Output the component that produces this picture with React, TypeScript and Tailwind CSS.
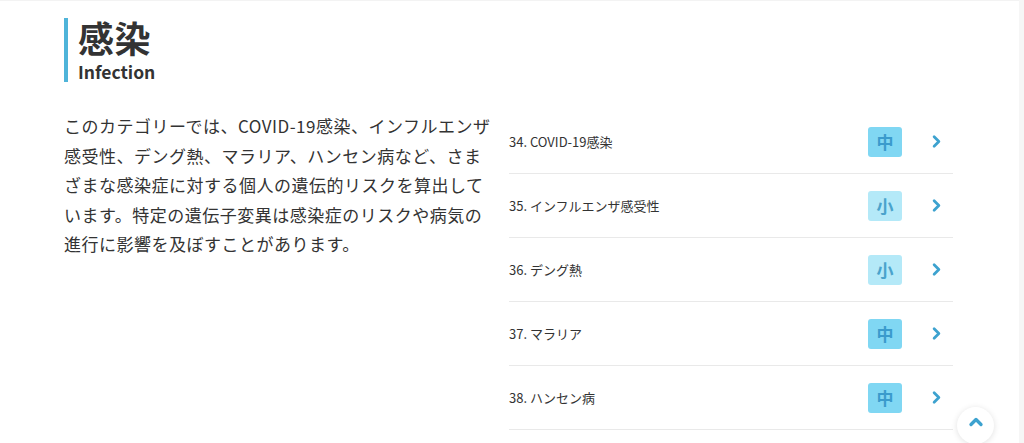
import { ChevronRight, ChevronUp } from 'lucide-react';

type Risk = '中' | '小';

interface TraitItem {
  no: number;
  name: string;
  risk: Risk;
}

const traits: TraitItem[] = [
  { no: 34, name: 'COVID-19感染', risk: '中' },
  { no: 35, name: 'インフルエンザ感受性', risk: '小' },
  { no: 36, name: 'デング熱', risk: '小' },
  { no: 37, name: 'マラリア', risk: '中' },
  { no: 38, name: 'ハンセン病', risk: '中' },
];

function RiskBadge({ risk }: { risk: Risk }) {
  return (
    <span
      className={`w-[34px] h-[30px] rounded-[3px] flex items-center justify-center text-[17px] font-bold ${
        risk === '中' ? 'bg-[#80d7f3] text-[#3a9bcc]' : 'bg-[#b4e9f8] text-[#4aa3cc]'
      }`}
    >
      {risk}
    </span>
  );
}

export default function App() {
  return (
    <div
      className="relative w-[1024px] h-[443px] overflow-hidden bg-white flex text-[#333]"
      style={{ fontFamily: '"Noto Sans CJK JP", "Noto Sans", sans-serif' }}
    >
      <div className="flex-1 border-t border-[#f3f3f3] pl-[64px] pt-[17px]">
        {/* Heading */}
        <div className="border-l-[4px] border-[#4fb4d9] pl-[10px] h-[64px] flex flex-col">
          <h1 className="text-[36px] font-bold leading-[38px] tracking-[0.5px]">感染</h1>
          <p className="text-[17.5px] font-bold leading-[22px] mt-[5px]">Infection</p>
        </div>

        <div className="flex items-start gap-[15px] mt-[28px]">
          {/* Description */}
          <p className="w-[430px] mt-[1px] text-[17px] leading-[29.5px] tracking-[0.5px] text-[#333]">
            このカテゴリーでは、COVID-19感染、インフルエンザ感受性、デング熱、マラリア、ハンセン病など、さまざまな感染症に対する個人の遺伝的リスクを算出しています。特定の遺伝子変異は感染症のリスクや病気の進行に影響を及ぼすことがあります。
          </p>

          {/* Trait list */}
          <ul className="w-[444px]">
            {traits.map((item) => (
              <li
                key={item.no}
                className="h-[64px] border-b border-[#e9e9e9] flex items-center"
              >
                <span className="flex-1 text-[13px] text-[#333]">
                  {item.no}. {item.name}
                </span>
                <RiskBadge risk={item.risk} />
                <ChevronRight
                  className="ml-[25px] mr-[7px] w-[19px] h-[19px] text-[#3da2cf]"
                  strokeWidth={3.5}
                />
              </li>
            ))}
          </ul>
        </div>
      </div>

      <div className="w-[5px] bg-[#f6f6f6]"></div>

      {/* Scroll to top */}
      <button className="absolute left-[957px] top-[407px] w-[37px] h-[37px] rounded-full bg-white shadow-[0_1px_6px_rgba(0,0,0,0.12)] flex items-center justify-center">
        <ChevronUp className="w-[20px] h-[20px] text-[#3da2cf] -mt-[8px]" strokeWidth={4} />
      </button>
    </div>
  );
}
